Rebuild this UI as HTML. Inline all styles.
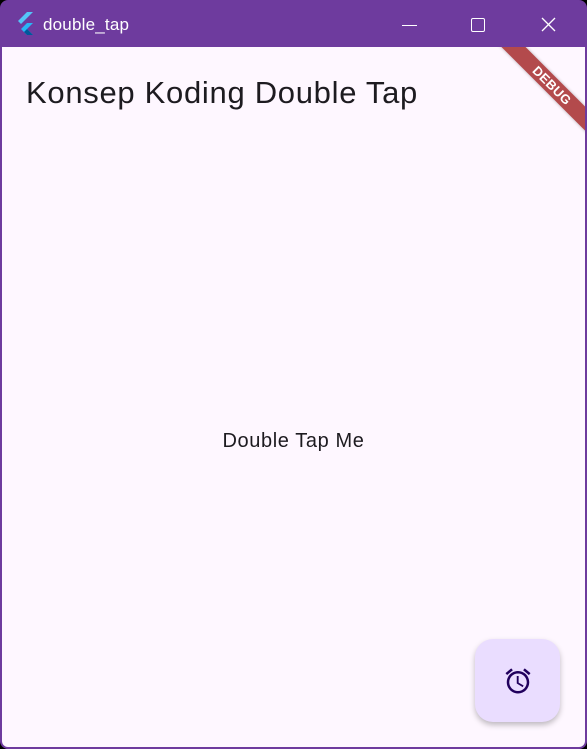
<!DOCTYPE html><html><head><style>
body{margin:0;width:587px;height:749px;background:#000;position:relative;overflow:hidden;font-family:"Liberation Sans",sans-serif}
.win{position:absolute;left:0;top:0;width:587px;height:749px;background:#6e3b9e;border-radius:8px 8px 8px 8px;overflow:hidden}
.tb{position:absolute;left:0;top:0;width:587px;height:47px;color:#fff}
.content{position:absolute;left:2px;top:47px;width:583px;height:700px;background:#fef7ff;overflow:hidden;border-radius:0 0 6px 6px}
.t{position:absolute;left:43px;top:15px;font-size:17px;letter-spacing:.2px}
h1{position:absolute;left:24px;top:28px;margin:0;font-weight:normal;font-size:31px;letter-spacing:.7px;color:#1d1b20;white-space:nowrap}
.c{position:absolute;left:0;width:583px;top:383px;text-align:center;font-size:20px;letter-spacing:.6px;color:#1d1b20}
.fab{position:absolute;left:473px;top:592px;width:85px;height:83px;border-radius:18px;background:#eaddff;box-shadow:0 3px 6px rgba(0,0,0,.25)}
.ban{position:absolute;right:-42px;top:30px;width:150px;height:17px;background:#b34a4c;transform:rotate(45deg);color:#fff;font-weight:bold;font-size:13px;text-align:center;line-height:17px;letter-spacing:.3px;box-shadow:0 0 3px rgba(0,0,0,.3)}
</style></head><body><div class="win">
<div class="tb">
<svg style="position:absolute;left:16px;top:12px" width="20" height="24" viewBox="0 0 20 24"><path d="M11 0h6L5 12 2 9z" fill="#54c5f8"/><path d="M11 11h6l-6 6 6 6h-6l-6-6z" fill="#29b6f6"/><path d="M8 20l3-3 6 6h-6z" fill="#01579b"/></svg>
<div class="t">double_tap</div>
<div style="position:absolute;left:402px;top:25px;width:15px;height:1px;background:#fff"></div>
<div style="position:absolute;left:471px;top:18px;width:12px;height:12px;border:1.3px solid #fff;border-radius:2px"></div>
<svg style="position:absolute;left:541px;top:17px" width="15" height="15"><path d="M1 1L14 14M14 1L1 14" stroke="#fff" stroke-width="1.3"/></svg>
</div>
<div class="content">
<h1>Konsep Koding Double Tap</h1>
<div class="c">Double Tap Me</div>
<div class="fab"><svg style="position:absolute;left:28px;top:27px" width="30" height="30" viewBox="0 0 24 24"><path fill="#21005d" d="M22 5.72l-4.6-3.86-1.29 1.53 4.6 3.86L22 5.72zM7.88 3.39L6.6 1.86 2 5.71l1.29 1.53 4.590-3.85zM12.5 8H11v6l4.75 2.85.75-1.23-4-2.37V8zM12 4c-4.970 0-9 4.03-9 9s4.02 9 9 9a9 9 0 0 0 0-18zm0 16c-3.87 0-7-3.13-7-7s3.13-7 7-7 7 3.13 7 7-3.13 7-7 7z"/></svg></div>
<div class="ban">DEBUG</div>
</div></div></body></html>
